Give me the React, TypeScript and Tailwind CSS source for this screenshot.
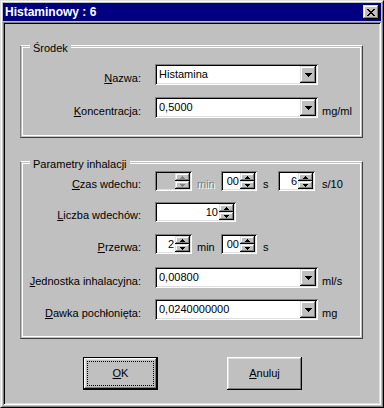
import React from "react";

const sunken =
  "shadow-[inset_1px_1px_0_#808080,inset_-1px_-1px_0_#ffffff,inset_2px_2px_0_#000000,inset_-2px_-2px_0_#dfdfdf]";
const raisedSmall =
  "shadow-[inset_-1px_-1px_0_#000000,inset_1px_1px_0_#dfdfdf,inset_-2px_-2px_0_#808080,inset_2px_2px_0_#ffffff]";
const raised =
  "shadow-[inset_-1px_-1px_0_#000000,inset_1px_1px_0_#ffffff,inset_-2px_-2px_0_#808080,inset_2px_2px_0_#dfdfdf]";

function U({ c }: { c: string }) {
  return <span className="underline underline-offset-[1px]">{c}</span>;
}

function DownArrow() {
  return (
    <svg width="7" height="4" shapeRendering="crispEdges">
      <path d="M0 0h7v1H0z M1 1h5v1H1z M2 2h3v1H2z M3 3h1v1H3z" fill="#000" />
    </svg>
  );
}

function SmallArrow({ up, disabled }: { up: boolean; disabled?: boolean }) {
  const d = up
    ? "M2 0h1v1H2z M1 1h3v1H1z M0 2h5v1H0z"
    : "M0 0h5v1H0z M1 1h3v1H1z M2 2h1v1H2z";
  return (
    <svg width="5" height="3" shapeRendering="crispEdges">
      <path d={d} fill={disabled ? "#808080" : "#000"} />
    </svg>
  );
}

function Combo({ value }: { value: string }) {
  return (
    <div className={`w-[163px] h-[21px] bg-white ${sunken} flex items-center p-[2px] shrink-0`}>
      <span className="flex-1 pl-[2px] leading-[13px] whitespace-nowrap">{value}</span>
      <div className={`w-[16px] h-[17px] bg-[#c0c0c0] ${raisedSmall} flex items-center justify-center`}>
        <DownArrow />
      </div>
    </div>
  );
}

function Spin({
  widthClass,
  value,
  disabled,
}: {
  widthClass: string;
  value: string;
  disabled?: boolean;
}) {
  return (
    <div
      className={`${widthClass} h-[20px] ${disabled ? "bg-[#c0c0c0]" : "bg-white"} ${sunken} flex p-[2px] shrink-0`}
    >
      <div className="flex-1 flex items-center justify-end pr-[1px] leading-[13px]">{value}</div>
      <div className="w-[15px] flex flex-col">
        <div className={`h-[8px] bg-[#c0c0c0] ${raisedSmall} flex items-center justify-center`}>
          <SmallArrow up disabled={disabled} />
        </div>
        <div className={`h-[8px] bg-[#c0c0c0] ${raisedSmall} flex items-center justify-center`}>
          <SmallArrow up={false} disabled={disabled} />
        </div>
      </div>
    </div>
  );
}

function Label({ children }: { children: React.ReactNode }) {
  return (
    <div className="w-[118px] mr-[14px] text-right leading-[13px] whitespace-nowrap shrink-0">
      {children}
    </div>
  );
}

function Group({
  title,
  className,
  children,
}: {
  title: string;
  className: string;
  children: React.ReactNode;
}) {
  return (
    <div
      className={`relative border border-t-white border-l-[#808080] border-r-[#404040] border-b-[#404040] p-[1px] ${className}`}
    >
      <div className="border border-white h-full">{children}</div>
      <span className="absolute top-[-4px] left-[9px] px-[3px] bg-[#c0c0c0] leading-[13px]">
        {title}
      </span>
    </div>
  );
}

function CloseBtn() {
  return (
    <div className={`w-[16px] h-[14px] bg-[#c0c0c0] ${raisedSmall} flex items-center justify-center`}>
      <svg width="8" height="7" shapeRendering="crispEdges">
        <path
          d="M0 0h2v1H0z M6 0h2v1H6z M1 1h2v1H1z M5 1h2v1H5z M2 2h4v1H2z M3 3h2v1H3z M2 4h4v1H2z M1 5h2v1H1z M5 5h2v1H5z M0 6h2v1H0z M6 6h2v1H6z"
          fill="#000"
        />
      </svg>
    </div>
  );
}

export default function App() {
  return (
    <div className="w-[384px] h-[408px] bg-[#c0c0c0] font-['Liberation_Sans',Arial,sans-serif] text-[11px] text-black border border-t-[#dfdfdf] border-l-[#dfdfdf] border-r-black border-b-black">
      <div className="h-full border border-t-white border-l-white border-r-[#808080] border-b-[#808080] p-[1px] flex flex-col">
        <div className="h-[18px] bg-[#000080] flex items-center pl-[2px] pr-[2px] shrink-0">
          <span className="text-white font-bold text-[12px] leading-[14px] flex-1">Histaminowy : 6</span>
          <CloseBtn />
        </div>
        <div className={`mt-[1px] flex-1 ${sunken} p-[2px] flex flex-col`}>
          <Group title="Środek" className="ml-[15px] mt-[21px] w-[343px] h-[93px]">
            <div className="pt-[16px] flex flex-col gap-[12px]">
              <div className="flex items-end">
                <Label>
                  <U c="N" />
                  azwa:
                </Label>
                <Combo value="Histamina" />
              </div>
              <div className="flex items-end">
                <Label>
                  <U c="K" />
                  oncentracja:
                </Label>
                <Combo value="0,5000" />
                <span className="ml-[4px] leading-[13px]">mg/ml</span>
              </div>
            </div>
          </Group>

          <Group title="Parametry inhalacji" className="ml-[15px] mt-[23px] w-[343px] h-[178px]">
            <div className="pt-[7px] flex flex-col">
              <div className="flex items-end">
                <Label>
                  <U c="C" />
                  zas wdechu:
                </Label>
                <Spin widthClass="w-[37px]" value="" disabled />
                <span className="w-[29px] pl-[5px] leading-[13px] text-[#808080] [text-shadow:1px_1px_0_#ffffff] shrink-0">
                  min
                </span>
                <Spin widthClass="w-[36px]" value="00" />
                <span className="w-[21px] pl-[6px] leading-[13px] shrink-0">s</span>
                <Spin widthClass="w-[37px]" value="6" />
                <span className="ml-[7px] leading-[13px]">s/10</span>
              </div>
              <div className="flex items-end mt-[11px]">
                <Label>
                  <U c="L" />
                  iczba wdechów:
                </Label>
                <Spin widthClass="w-[81px]" value="10" />
              </div>
              <div className="flex items-end mt-[12px]">
                <Label>
                  <U c="P" />
                  rzerwa:
                </Label>
                <Spin widthClass="w-[37px]" value="2" />
                <span className="w-[29px] pl-[5px] leading-[13px] shrink-0">min</span>
                <Spin widthClass="w-[36px]" value="00" />
                <span className="ml-[6px] leading-[13px]">s</span>
              </div>
              <div className="flex items-end mt-[13px]">
                <Label>
                  <U c="J" />
                  ednostka inhalacyjna:
                </Label>
                <Combo value="0,00800" />
                <span className="ml-[4px] leading-[13px]">ml/s</span>
              </div>
              <div className="flex items-end mt-[11px]">
                <Label>
                  <U c="D" />
                  awka pochłonięta:
                </Label>
                <Combo value="0,0240000000" />
                <span className="ml-[4px] leading-[13px]">mg</span>
              </div>
            </div>
          </Group>

          <div className="mt-[18px] flex pl-[78px] gap-[69px]">
            <div className="w-[75px] h-[33px] border border-black">
              <div className={`w-full h-full bg-[#c0c0c0] ${raised} p-[3px]`}>
                <div className="w-full h-full border border-dotted border-black flex items-center justify-center leading-[13px]">
                  <span>
                    <U c="O" />K
                  </span>
                </div>
              </div>
            </div>
            <div className={`w-[75px] h-[33px] bg-[#c0c0c0] ${raised} flex items-center justify-center leading-[13px]`}>
              <span>
                <U c="A" />
                nuluj
              </span>
            </div>
          </div>
        </div>
      </div>
    </div>
  );
}
